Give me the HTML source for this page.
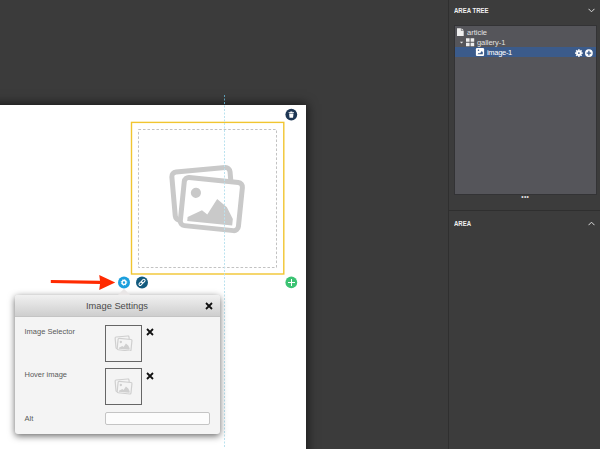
<!DOCTYPE html>
<html>
<head>
<meta charset="utf-8">
<title>Image Settings</title>
<style>
*{box-sizing:border-box;margin:0;padding:0}
html,body{width:600px;height:449px;overflow:hidden;background:#3b3b3b;font-family:"Liberation Sans",sans-serif}
.abs{position:absolute}
#stage{position:absolute;left:0;top:0;width:600px;height:449px;overflow:hidden;background:#3b3b3b}
#canvas{position:absolute;left:-20px;top:105px;width:326px;height:380px;background:#fff;box-shadow:0 0 10px 1px rgba(0,0,0,.65)}
#guide{position:absolute;left:224px;top:95px;width:1px;height:353px}
#dbox{position:absolute;left:138px;top:129px;width:139.5px;height:139.5px}
#panel{position:absolute;left:448px;top:0;width:152px;height:449px;background:#3c3c3c;border-left:1px solid #2f2f2f}
.ptitle{position:absolute;color:#f0f0f0;font-weight:bold;font-size:7px;letter-spacing:0;white-space:nowrap;transform-origin:0 50%;transform:scaleX(0.86)}
#tree{position:absolute;left:454px;top:25px;width:143px;height:169.5px;background:#55555a;border:1px solid #333335}
.row{position:absolute;left:0;width:141px;height:10px;color:#e2e2e2;font-size:7.5px;line-height:10px;white-space:nowrap}
.row span{position:absolute;top:0}
#dlg{position:absolute;left:15px;top:295px;width:205px;height:139px;background:#f4f4f4;border-radius:3px;box-shadow:0 2px 7px rgba(0,0,0,.6)}
#dlg .tb{position:absolute;left:0;top:0;width:205px;height:22px;border-radius:3px 3px 0 0;background:linear-gradient(#f1f1f1,#cecece);border-bottom:1px solid #c4c4c4}
#dlg .tt{position:absolute;left:-0.5px;top:5px;width:205px;text-align:center;font-size:9.3px;color:#4a4a4a;line-height:13px;white-space:nowrap}
.lbl{position:absolute;font-size:7.5px;color:#5a5a5a;line-height:10px;white-space:nowrap}
.thumb{position:absolute;left:90px;width:37px;height:37px;border:1px solid #666;background:#f4f4f4}
.inp{position:absolute;left:90px;top:116.5px;width:105px;height:13px;border:1px solid #c4c4c4;border-radius:2px;background:#fcfcfc}
</style>
</head>
<body>
<div id="stage">
  <div id="canvas"></div>
  <svg class="abs" style="left:129px;top:120px" width="158" height="157" viewBox="129 120 158 157"><rect x="131.5" y="122.4" width="152.3" height="151.6" fill="none" stroke="#f1c530" stroke-width="1.4"/></svg>
  <svg id="dbox" width="140" height="140" viewBox="0 0 140 140"><rect x="0.5" y="0.5" width="138.5" height="138.5" fill="none" stroke="#c2c2c2" stroke-width="1" stroke-dasharray="2.6 1.9"/></svg>

  <!-- big placeholder icon -->
  <svg class="abs" style="left:160px;top:155px" width="100" height="85" viewBox="160 155 100 85">
    <g transform="translate(202.65 193.85) rotate(-5)">
      <rect x="-29.2" y="-24.2" width="58.4" height="48.4" rx="4.5" fill="#fff" stroke="#c9c9c9" stroke-width="5"/>
    </g>
    <g transform="translate(211.35 204.05) rotate(5.8)">
      <rect x="-29.2" y="-24.2" width="58.4" height="48.4" rx="4.5" fill="#fff" stroke="#c9c9c9" stroke-width="5"/>
      <circle cx="-16.5" cy="-9.6" r="5.1" fill="#c9c9c9"/>
      <path d="M-22.3 15.3 L-8.7 7 L-3 10.7 L5.3 -5.5 L15.8 1.5 L22.9 12.8 L22.9 19.3 L-22.3 19.3 Z" fill="#c9c9c9"/>
    </g>
  </svg>

  <svg id="guide" width="1" height="353" viewBox="0 0 1 353"><line x1="0.5" y1="0" x2="0.5" y2="10.5" stroke="#5b9cb4" stroke-width="1" stroke-dasharray="2 1.5"/><line x1="0.5" y1="10.5" x2="0.5" y2="352" stroke="#bbe2ef" stroke-width="1" stroke-dasharray="2 1.5"/></svg>
  <!-- trash -->
  <svg class="abs" style="left:284px;top:107px" width="15" height="15" viewBox="284 107 15 15">
    <circle cx="291.3" cy="114.6" r="5.9" fill="#1d3654"/>
    <path transform="translate(285.3 108.6)" d="M3.3 3.6h5.4v0.9h-5.4z M5 2.8h2v0.9h-2z M3.8 5h4.4l-0.45 4.2h-3.5z" fill="#fff"/>
  </svg>
  <!-- plus -->
  <svg class="abs" style="left:284px;top:275px" width="15" height="15" viewBox="284 275 15 15">
    <circle cx="291.3" cy="282.4" r="5.9" fill="#3cc373"/>
    <path d="M291.5 279v7M288 282.5h7" stroke="#fff" stroke-width="1" fill="none"/>
  </svg>
  <!-- gear -->
  <svg class="abs" style="left:116px;top:275px" width="34" height="15" viewBox="116 275 34 15">
    <circle cx="124" cy="282.4" r="6" fill="#1c9fdd"/>
    <circle cx="124" cy="282.4" r="1.9" fill="none" stroke="#fff" stroke-width="1.3"/>
    <circle cx="124" cy="282.4" r="2.8" fill="none" stroke="#fff" stroke-width="1" stroke-dasharray="1.1 1.1"/>
    <!-- link -->
    <circle cx="142" cy="282.4" r="6" fill="#125a7e"/>
    <g transform="translate(136 276.4) rotate(-45 6 6)" fill="none" stroke="#fff" stroke-width="1">
      <rect x="2.2" y="4.8" width="4.1" height="2.4" rx="1.2"/>
      <rect x="5.7" y="4.8" width="4.1" height="2.4" rx="1.2"/>
    </g>
  </svg>
  <!-- arrow -->
  <svg class="abs" style="left:48px;top:272px" width="72" height="20" viewBox="48 272 72 20">
    <path d="M50.8 279.9 L100 280.7 L99.2 275 L115.2 282.4 L99.2 289.9 L100 283.9 L50.8 283.1 Z" fill="#ff2a00"/>
  </svg>

  <!-- dialog -->
  <div id="dlg">
    <svg class="abs" style="left:102px;top:-7px" width="14" height="7" viewBox="0 0 14 7"><path d="M1 7L7 0.8L13 7Z" fill="#e9e6e6"/></svg>
    <div class="tb"></div>
    <div class="tt">Image Settings</div>
    <svg class="abs" style="left:190px;top:7px" width="8" height="8" viewBox="0 0 8 8"><path d="M1 1L7 7M7 1L1 7" stroke="#111" stroke-width="1.8"/></svg>
    <div class="lbl" style="left:9.5px;top:31.8px">Image Selector</div>
    <div class="thumb" style="top:29.5px"><svg class="abs" style="left:8px;top:9.2px" width="19.04" height="16.66" viewBox="167 163.5 80 70">
      <g transform="translate(202.65 193.85) rotate(-5)"><rect x="-29.2" y="-24.2" width="58.4" height="48.4" rx="4.5" fill="#f4f4f4" stroke="#cfcfcf" stroke-width="5"/></g>
      <g transform="translate(211.35 204.05) rotate(5.8)"><rect x="-29.2" y="-24.2" width="58.4" height="48.4" rx="4.5" fill="#f4f4f4" stroke="#cfcfcf" stroke-width="5"/><circle cx="-16.5" cy="-9.6" r="5.1" fill="#cfcfcf"/><path d="M-22.3 15.3 L-8.7 7 L-3 10.7 L5.3 -5.5 L15.8 1.5 L22.9 12.8 L22.9 19.3 L-22.3 19.3 Z" fill="#cfcfcf"/></g>
    </svg></div>
    <svg class="abs" style="left:131px;top:33px" width="8" height="8" viewBox="0 0 8 8"><path d="M1 1L7 7M7 1L1 7" stroke="#111" stroke-width="1.8"/></svg>
    <div class="lbl" style="left:9.5px;top:74.8px">Hover image</div>
    <div class="thumb" style="top:73px"><svg class="abs" style="left:8px;top:9.2px" width="19.04" height="16.66" viewBox="167 163.5 80 70">
      <g transform="translate(202.65 193.85) rotate(-5)"><rect x="-29.2" y="-24.2" width="58.4" height="48.4" rx="4.5" fill="#f4f4f4" stroke="#cfcfcf" stroke-width="5"/></g>
      <g transform="translate(211.35 204.05) rotate(5.8)"><rect x="-29.2" y="-24.2" width="58.4" height="48.4" rx="4.5" fill="#f4f4f4" stroke="#cfcfcf" stroke-width="5"/><circle cx="-16.5" cy="-9.6" r="5.1" fill="#cfcfcf"/><path d="M-22.3 15.3 L-8.7 7 L-3 10.7 L5.3 -5.5 L15.8 1.5 L22.9 12.8 L22.9 19.3 L-22.3 19.3 Z" fill="#cfcfcf"/></g>
    </svg></div>
    <svg class="abs" style="left:131px;top:76.6px" width="8" height="8" viewBox="0 0 8 8"><path d="M1 1L7 7M7 1L1 7" stroke="#111" stroke-width="1.8"/></svg>
    <div class="lbl" style="left:9.5px;top:118.6px">Alt</div>
    <div class="inp"></div>
  </div>

  <!-- right panel -->
  <div id="panel"></div>
  <div class="ptitle" style="left:454px;top:6px;line-height:9px">AREA TREE</div>
  <svg class="abs" style="left:588px;top:8px" width="7" height="5" viewBox="0 0 7 5"><path d="M0.5 0.8L3.5 3.8L6.5 0.8" fill="none" stroke="#ddd" stroke-width="1"/></svg>
  <div id="tree">
    <div class="row" style="top:2px"><span style="left:12px">article</span></div>
    <div class="row" style="top:12.1px"><span style="left:22px;top:0.3px;letter-spacing:-0.05px">gallery-1</span></div>
    <div class="row" style="top:21.3px;background:#3b5b8b;color:#fff"><span style="left:32px;top:0.8px;letter-spacing:-0.3px">image-1</span></div>
  </div>
  <!-- tree icons -->
  <svg class="abs" style="left:456px;top:27px" width="10" height="10" viewBox="456 27 10 10">
    <path d="M457 28.2h3.9v2.6h2.8v5.2h-6.7z M461.5 28.2l2.2 2.1h-2.2z" fill="#eeeeee"/>
  </svg>
  <svg class="abs" style="left:458px;top:37px" width="18" height="10" viewBox="458 37 18 10">
    <path d="M459.9 41.7h3.3l-1.65 1.8z" fill="#e6e6e6"/>
    <path d="M466 38.3h3.6v3.5h-3.6z M470.6 38.3h3.6v3.5h-3.6z M466 42.7h3.6v3.5h-3.6z M470.6 42.7h3.6v3.5h-3.6z" fill="#eeeeee"/>
  </svg>
  <svg class="abs" style="left:475px;top:47px" width="10" height="10" viewBox="475 47 10 10">
    <rect x="475.9" y="48.1" width="8.2" height="7.9" rx="1.1" fill="#ffffff"/>
    <circle cx="478.5" cy="50.2" r="0.75" fill="#3b5b8b"/>
    <path d="M477.4 54.3 L479 52.8 L479.9 53.4 L481.8 51 L482.8 52.2 L482.8 54.3 Z" fill="#3b5b8b"/>
  </svg>
  <svg class="abs" style="left:574px;top:48px" width="20" height="10" viewBox="574 48 20 10">
    <g transform="translate(578.9 53.1)">
      <circle r="2.6" fill="#fff"/>
      <g fill="#fff">
        <rect x="-0.8" y="-3.8" width="1.6" height="7.6"/>
        <rect x="-0.8" y="-3.8" width="1.6" height="7.6" transform="rotate(45)"/>
        <rect x="-0.8" y="-3.8" width="1.6" height="7.6" transform="rotate(90)"/>
        <rect x="-0.8" y="-3.8" width="1.6" height="7.6" transform="rotate(135)"/>
      </g>
      <circle r="0.9" fill="#3b5b8b"/>
    </g>
    <g transform="translate(588.9 53.1)">
      <circle r="3.9" fill="#fff"/>
      <path d="M-2.3 0h4.6M0 -2.3v4.6" stroke="#3b5b8b" stroke-width="1.3"/>
    </g>
  </svg>
  <div class="abs" style="left:521.3px;top:192.4px;color:#e2e2e2;font-size:6.6px;line-height:9px;letter-spacing:0.35px">•••</div>
  <div class="abs" style="left:449px;top:210px;width:151px;height:1px;background:#2f2f2f"></div>
  <div class="ptitle" style="left:454px;top:219px;line-height:9px">AREA</div>
  <svg class="abs" style="left:588px;top:221px" width="7" height="5" viewBox="0 0 7 5"><path d="M0.5 4.2L3.5 1.2L6.5 4.2" fill="none" stroke="#ddd" stroke-width="1"/></svg>
</div>
</body>
</html>
